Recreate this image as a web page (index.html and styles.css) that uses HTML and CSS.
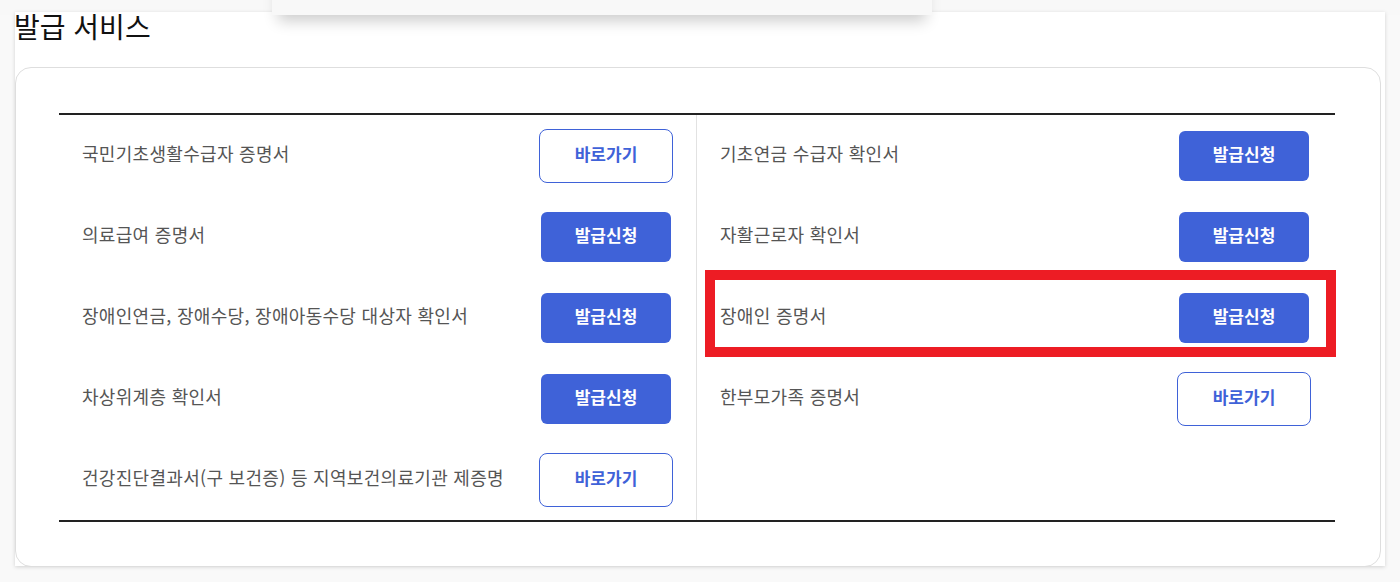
FILE: index.html
```html
<!DOCTYPE html>
<html lang="ko">
<head>
<meta charset="utf-8">
<title>발급 서비스</title>
<link rel="stylesheet" href="styles.css">
</head>
<body>
<div class="topbar"></div>
<div class="floater"></div>
<section class="panel">
  <h2 class="title">발급 서비스</h2>
  <div class="card">
    <div class="table">
      <div class="col col-left">
        <div class="row"><span class="label">국민기초생활수급자 증명서</span><a class="btn btn-line">바로가기</a></div>
        <div class="row"><span class="label">의료급여 증명서</span><a class="btn btn-fill">발급신청</a></div>
        <div class="row"><span class="label">장애인연금, 장애수당, 장애아동수당 대상자 확인서</span><a class="btn btn-fill">발급신청</a></div>
        <div class="row"><span class="label">차상위계층 확인서</span><a class="btn btn-fill">발급신청</a></div>
        <div class="row"><span class="label">건강진단결과서(구 보건증) 등 지역보건의료기관 제증명</span><a class="btn btn-line">바로가기</a></div>
      </div>
      <div class="col col-right">
        <div class="row"><span class="label">기초연금 수급자 확인서</span><a class="btn btn-fill">발급신청</a></div>
        <div class="row"><span class="label">자활근로자 확인서</span><a class="btn btn-fill">발급신청</a></div>
        <div class="row"><span class="label">장애인 증명서</span><a class="btn btn-fill">발급신청</a></div>
        <div class="row"><span class="label">한부모가족 증명서</span><a class="btn btn-line">바로가기</a></div>
      </div>
      <div class="highlight"></div>
    </div>
  </div>
</section>
</body>
</html>
```
FILE: styles.css
```css
* { box-sizing: border-box; }
html, body { margin: 0; padding: 0; }
body {
  background: #f9f9f9;
  font-family: "Noto Sans CJK KR", "Noto Sans", sans-serif;
  position: relative;
  height: 582px;
  overflow: hidden;
}
.topbar {
  height: 15px;
  background: #f8f8f8;
}
.floater {
  position: absolute;
  left: 272px;
  top: -60px;
  width: 660px;
  height: 75px;
  background: #f8f8f8;
  box-shadow: 0 12px 14px -6px rgba(0, 0, 0, 0.2);
  z-index: 3;
}
.panel {
  position: relative;
  z-index: 1;
  margin-left: 15px;
  width: 1370px;
  height: 554px;
  background: #fff;
  box-shadow: 0 1px 4px rgba(0, 0, 0, 0.16);
  padding: 0 4px 0 0;
}
.title {
  margin: -3px 0 0 -1px;
  font-size: 28px;
  line-height: 28px;
  font-weight: 400;
  color: #111;
}
.card {
  margin-top: 27px;
  border: 1px solid #dedede;
  border-radius: 16px;
  padding: 45px 45px 44px 43px;
}
.table {
  position: relative;
  display: grid;
  grid-template-columns: 1fr 1fr;
  border-top: 2px solid #222;
  border-bottom: 2px solid #222;
}
.col-left { border-right: 1px solid #e2e2e2; }
.row {
  height: 81px;
  display: flex;
  align-items: center;
  justify-content: space-between;
  padding: 0 23px 0 23px;
}
.col-left .row { padding-right: 23px; }
.col-right .row { padding-right: 24px; }
.label {
  font-size: 18px;
  letter-spacing: 0.3px;
  color: #555;
  padding-bottom: 6px;
}
.btn {
  display: flex;
  align-items: center;
  justify-content: center;
  font-size: 17px;
  font-weight: 700;
  text-decoration: none;
  padding-bottom: 5px;
}
.btn-line {
  width: 134px;
  height: 54px;
  border: 1px solid #3f62d8;
  border-radius: 8px;
  color: #3f62d8;
  background: #fff;
}
.btn-fill {
  width: 130px;
  height: 50px;
  margin: 2px;
  border-radius: 6px;
  background: #3f62d8;
  color: #fff;
}
.highlight {
  position: absolute;
  left: 646px;
  top: 155px;
  width: 631px;
  height: 87px;
  border: 10px solid #ed1c24;
  pointer-events: none;
}
```
